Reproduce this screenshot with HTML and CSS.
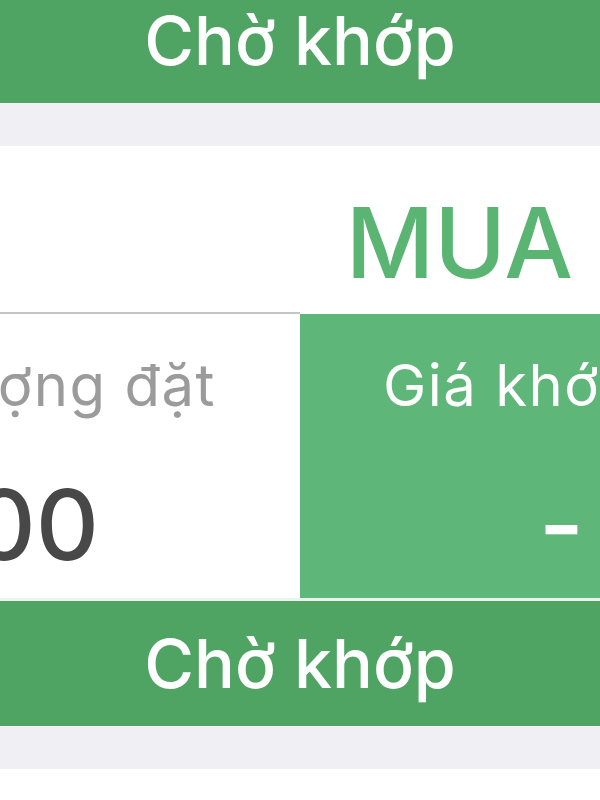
FILE: index.html
```html
<!DOCTYPE html>
<html lang="vi">
<head>
  <meta charset="UTF-8">
  <title>Lệnh chờ khớp</title>
  <link rel="stylesheet" href="styles.css">
</head>
<body>

  <div class="screen">
    <div class="status-bar status-top">Chờ khớp</div>
    <div class="gap"></div>

    <section class="order">
      <div class="side">MUA</div>
      <div class="cells">
        <div class="cell cell-qty">
          <div class="label">Khối lượng đặt</div>
          <div class="value">1.000</div>
        </div>
        <div class="cell cell-price">
          <div class="label">Giá khớp</div>
          <div class="value">-</div>
        </div>
      </div>
    </section>

    <div class="status-bar">Chờ khớp</div>
    <div class="gap"></div>
  </div>

</body>
</html>
```

FILE: styles.css
```css
body { margin: 0; background: #fff; font-family: Inter, "Liberation Sans", sans-serif; }
.screen { width: 600px; height: 800px; overflow: hidden; }

.status-bar { height: 125px; line-height: 125px; background: #4fa463; color: #fff; text-align: center; font-size: 68px; font-weight: 500; }
.status-top { margin-top: -22px; }
.gap { height: 42px; background: #efeff4; border-top: 1px solid #f6f3f8; }

.order { background: #fff; }
.side { text-align: right; padding: 48px 27px 22px 0; font-size: 97px; line-height: 98px; color: #5ab573; font-weight: 500; }

.cells { display: grid; grid-template-columns: 300px 300px; height: 284px; border-bottom: 3px solid #e9f4ec; }
.cell { display: flex; flex-direction: column; white-space: nowrap; }
.label { font-size: 58px; line-height: 64px; margin-top: 39px; letter-spacing: 1.5px; }
.value { font-size: 98px; line-height: 100px; margin-top: 58px; font-weight: 500; }

.cell-qty { align-items: flex-end; border-top: 2px solid #c4c4c4; margin-top: -2px; }
.cell-qty .label { color: #9b9b9b; margin-right: 84px; }
.cell-qty .value { color: #484848; margin-right: 201px; }

.cell-price { background: #5eb678; color: #fff; align-items: flex-start; }
.cell-price .label { margin-left: 83px; }
.cell-price .value { align-self: flex-end; margin-right: 16px; }
```
